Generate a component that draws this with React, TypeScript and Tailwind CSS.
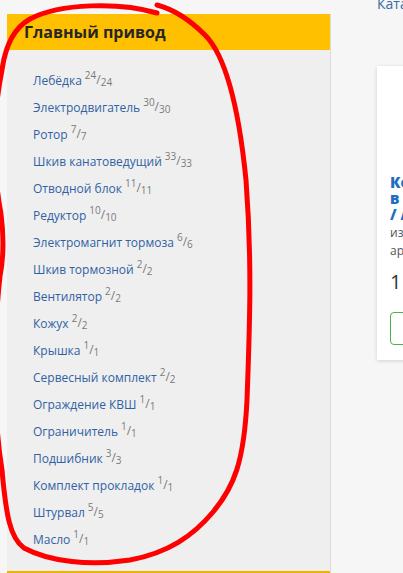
import React from "react";

interface Part {
    name: string;
    have: number;
    total: number;
}

const parts: Part[] = [
    { name: "Лебёдка", have: 24, total: 24 },
    { name: "Электродвигатель", have: 30, total: 30 },
    { name: "Ротор", have: 7, total: 7 },
    { name: "Шкив канатоведущий", have: 33, total: 33 },
    { name: "Отводной блок", have: 11, total: 11 },
    { name: "Редуктор", have: 10, total: 10 },
    { name: "Электромагнит тормоза", have: 6, total: 6 },
    { name: "Шкив тормозной", have: 2, total: 2 },
    { name: "Вентилятор", have: 2, total: 2 },
    { name: "Кожух", have: 2, total: 2 },
    { name: "Крышка", have: 1, total: 1 },
    { name: "Сервесный комплект", have: 2, total: 2 },
    { name: "Ограждение КВШ", have: 1, total: 1 },
    { name: "Ограничитель", have: 1, total: 1 },
    { name: "Подшибник", have: 3, total: 3 },
    { name: "Комплект прокладок", have: 1, total: 1 },
    { name: "Штурвал", have: 5, total: 5 },
    { name: "Масло", have: 1, total: 1 },
];

// the hand-drawn red loop that sits on top of the screenshot
function Scribble() {
    return (
        <svg className="pointer-events-none absolute inset-0" width="403" height="573" viewBox="0 0 403 573">
            <path
                d="M157,13 C120,2 60,3 30,19 C12,29 5,48 2,70 C-8,120 -8,165 1,214 C4,238 4,256 0,276 C-8,350 -6,420 2,470 C6,515 10,538 24,548 C50,562 90,566 130,560 C168,553 193,536 213,512 C234,487 244,462 247,400 C250,320 252,260 246,180 C240,120 228,58 205,35 C190,20 172,9 157,5"
                fill="none"
                stroke="#ff0000"
                strokeWidth="5"
                strokeLinecap="round"
            />
        </svg>
    );
}

export default function App() {
    return (
        <div
            className="relative flex h-[573px] w-[403px] overflow-hidden bg-[#f6f6f6]"
            style={{ fontFamily: '"Open Sans", "Noto Sans", sans-serif' }}
        >
            {/* Left: category panel */}
            <div className="ml-[7px] mt-[14px] flex w-[324px] shrink-0 flex-col border-r border-[#dcdcdc] bg-[#efefef]">
                <div className="flex h-[36px] items-center bg-[#ffc000] pl-[17px]">
                    <h2 className="text-[16px] font-bold text-[#262626]">Главный привод</h2>
                </div>
                <ul className="flex flex-col pl-[26px] pt-[17px]">
                    {parts.map((p) => (
                        <li key={p.name} className="flex h-[27px] items-center text-[12px] font-medium text-[#2f62a3]">
                            <span>{p.name}</span>
                            <span className="ml-[3px] flex items-start font-normal text-[#7a7a7a]">
                                <span className="-mt-[4px] text-[10px] leading-none">{p.have}</span>
                                <span className="text-[12px] leading-none">/</span>
                                <span className="mt-[3px] text-[10px] leading-none">{p.total}</span>
                            </span>
                        </li>
                    ))}
                </ul>
                <div className="mt-auto h-[2px] bg-[#f0b400]" />
            </div>

            {/* Right: catalog column (cut off) */}
            <div className="ml-[46px] flex shrink-0 flex-col">
                <span className="-mt-[7px] text-[14px] text-[#3a6ba3]">Каталог</span>
                <div className="mt-[52px] flex h-[294px] w-[200px] flex-col bg-white pl-[13px] pt-[108px] shadow-[0_1px_4px_rgba(0,0,0,0.15)]">
                    <div className="text-[15px] font-extrabold leading-[16px] text-[#1f6fbf]">
                        <div>Компрессор</div>
                        <div>в сборе</div>
                        <div>/ Артикул</div>
                    </div>
                    <div className="mt-[2px] text-[12px] leading-[18px] text-[#555]">
                        <div>изготовитель</div>
                        <div>артикул</div>
                    </div>
                    <div className="mt-[10px] text-[20px] leading-[24px] text-[#333]">1 200 ₽</div>
                    <div className="mt-[18px] h-[33px] w-[150px] rounded-[4px] border border-[#4caf50]" />
                </div>
            </div>

            <Scribble />
        </div>
    );
}
